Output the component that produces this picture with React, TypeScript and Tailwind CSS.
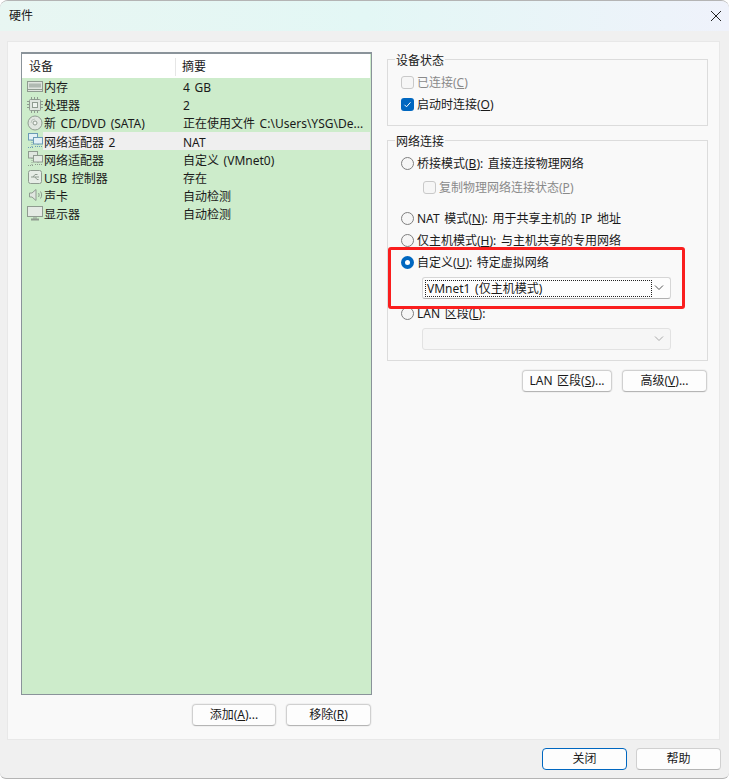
import React from "react";

const font = { fontFamily: '"Noto Sans","Noto Sans CJK SC",sans-serif' };

const devices: [string, string, string][] = [
  ["mem", "内存", "4 GB"],
  ["cpu", "处理器", "2"],
  ["cd", "新 CD/DVD (SATA)", "正在使用文件 C:\\Users\\YSG\\De..."],
  ["net", "网络适配器 2", "NAT"],
  ["net", "网络适配器", "自定义 (VMnet0)"],
  ["usb", "USB 控制器", "存在"],
  ["snd", "声卡", "自动检测"],
  ["mon", "显示器", "自动检测"],
];

function DevIcon({ kind, active }: { kind: string; active?: boolean }) {
  const c = active ? "#6a9ab5" : "#8f9b90";
  const s = { fill: "none", stroke: c, strokeWidth: 1 };
  return (
    <svg width="16" height="16" viewBox="0 0 16 16" className="shrink-0">
      {kind === "mem" && (
        <g {...s}>
          <rect x="0.5" y="2.5" width="15" height="10" fill="#dfe5df" />
          <path d="M2 5.500h12M2 7.500h12" strokeWidth="2" stroke="#b0bab2" />
          <path d="M1 10.500h14" />
        </g>
      )}
      {kind === "cpu" && (
        <g {...s}>
          <rect x="2.5" y="2.5" width="11" height="11" rx="1" fill="#dfe5df" />
          <rect x="5.5" y="5.5" width="5" height="5" fill="#eef3ee" />
          <path d="M4.500 0v2M7.500 0v2M10.500 0v2M4.500 14v2M7.500 14v2M10.500 14v2M0 4.500h2M0 7.500h2M0 10.500h2M14 4.500h2M14 7.500h2M14 10.500h2" />
        </g>
      )}
      {kind === "cd" && (
        <g {...s}>
          <circle cx="8" cy="8" r="7" fill="#e0e6e0" />
          <circle cx="8" cy="8" r="2" fill="#f2f5f2" />
          <path d="M4 8a4 4 0 0 1 4-4" stroke="#bcc5bd" />
        </g>
      )}
      {kind === "net" && (
        <g {...s}>
          <rect x="1.5" y="0.5" width="9" height="6.500" fill={active ? "#e2f0f6" : "#dfe6df"} />
          <rect x="6.5" y="4.500" width="9" height="6.500" fill={active ? "#e2f0f6" : "#e4ebe4"} />
          <path d="M11 11v2M8 13.500h7M5 7v7M1 14.500h6" strokeDasharray="1 1" />
        </g>
      )}
      {kind === "usb" && (
        <g {...s}>
          <rect x="1.5" y="1.5" width="13" height="13" rx="2" fill="#e6ece6" />
          <path d="M4 8h8M6 8l2-2.500h2.500M8 8l2 2.500h1.500" />
        </g>
      )}
      {kind === "snd" && (
        <g {...s}>
          <path d="M2.500 6v4h2.500l4 3.500v-11L5 6z" fill="#e0e6e0" />
          <path d="M11.500 6c.8 1.200.8 2.800 0 4M13.500 4.500c1.500 2.200 1.500 4.800 0 7" />
        </g>
      )}
      {kind === "mon" && (
        <g {...s}>
          <rect x="0.5" y="1.5" width="15" height="10" fill="#e4eae4" />
          <path d="M4 14.500h8" strokeWidth="2" />
          <path d="M7 12v2M9 12v2" />
        </g>
      )}
    </svg>
  );
}

function Check({ checked, label, className = "" }: { checked?: boolean; label: React.ReactNode; className?: string }) {
  return (
    <div className={`flex items-center h-[18px] gap-[3px] ${className}`}>
      {checked ? (
        <span className="w-[13px] h-[13px] rounded-[3px] bg-[#0067c0] flex items-center justify-center">
          <svg width="9" height="9" viewBox="0 0 9 9"><path d="M1.500 4.800l2 2 4-4.500" fill="none" stroke="#fff" strokeWidth="1" /></svg>
        </span>
      ) : (
        <span className="w-[13px] h-[13px] rounded-[3px] border border-[#c9c9c9] bg-[#f6f6f6]" />
      )}
      <span className={`pt-px ${checked ? "text-[#1a1a1a]" : "text-[#8a8a8a]"}`}>{label}</span>
    </div>
  );
}

function Radio({ on, label, className = "" }: { on?: boolean; label: React.ReactNode; className?: string }) {
  return (
    <div className={`flex items-center h-[18px] gap-[3px] ${className}`}>
      {on ? (
        <span className="w-[13px] h-[13px] rounded-full bg-[#0067c0] flex items-center justify-center">
          <span className="w-[5px] h-[5px] rounded-full bg-white" />
        </span>
      ) : (
        <span className="w-[13px] h-[13px] rounded-full border border-[#7f7f7f] bg-[#f6f6f6]" />
      )}
      <span className="pt-px">{label}</span>
    </div>
  );
}

function Chevron({ color }: { color: string }) {
  return (
    <svg width="10" height="6" viewBox="0 0 10 6"><path d="M1 .5l4 4 4-4" fill="none" stroke={color} strokeWidth="1" /></svg>
  );
}

function Btn({ children, className = "" }: { children: React.ReactNode; className?: string }) {
  return (
    <div className={`h-[22px] flex items-center justify-center rounded-[4px] border border-[#d0d0d0] border-b-[#b5b5b5] bg-[#fdfdfd] shadow-[0_0_0_1px_#f0f0f0] text-[#1a1a1a] ${className}`}>
      {children}
    </div>
  );
}

function Group({ title, children, className = "" }: { title: string; children: React.ReactNode; className?: string }) {
  return (
    <fieldset className={`border border-[#dcdcdc] pl-[13px] pr-[13px] ${className}`}>
      <legend className="-ml-[6px] px-px pt-[4px] leading-[14px] text-[#1a1a1a]">{title}</legend>
      {children}
    </fieldset>
  );
}

export default function App() {
  return (
    <div style={font} className="w-[729px] h-[779px] bg-white text-[12px] leading-[18px] [word-spacing:1.5px] text-[#1a1a1a] overflow-hidden">
      <div className="w-full h-full flex flex-col rounded-t-[8px] rounded-b-[6px] border border-[#b4b4b4] border-l-0 border-r-0 bg-[#f0f0f0] overflow-hidden">
        <div className="h-[30px] shrink-0 flex items-center justify-between pl-[9px] pr-[6px] bg-gradient-to-r from-[#e8f6f2] via-[#e3f7f5] to-[#eff2fb]">
          <span>硬件</span>
          <svg width="14" height="14" viewBox="0 0 14 14"><path d="M2 2l10 10M12 2L2 12" stroke="#222" strokeWidth="1" fill="none" /></svg>
        </div>

        <div className="mt-[10px] mx-[7px] mr-[9px] h-[699px] shrink-0 border border-[#e8e8e8] bg-[#f9f9f9] flex pl-[13px] pt-[10px] pr-[11px] gap-[15px]">
          <div className="w-[351px] shrink-0 flex flex-col">
            <div className="h-[643px] border border-[#8a939a] border-t-2 bg-[#cdeccb] flex flex-col">
              <div className="h-[24px] shrink-0 bg-white flex items-center mr-px pt-[2px]">
                <span className="w-[154px] pl-[7px] border-r border-[#e6e6e6]">设备</span>
                <span className="pl-[6px]">摘要</span>
              </div>
              {devices.map(([k, name, val], i) => (
                <div key={i} className="h-[18px] shrink-0 flex items-center pl-[5px] whitespace-nowrap">
                  <div className="w-[16px] shrink-0 flex justify-start"><DevIcon kind={k} active={i === 3} /></div>
                  <div className={`flex-1 flex h-full items-center mr-px ${i >= 3 ? "pt-[3px]" : "pt-[2px]"} ${i === 3 ? "bg-[#efefef]" : ""}`}>
                    <span className="w-[140px] shrink-0 pl-px">{name}</span>
                    <span>{val}</span>
                  </div>
                </div>
              ))}
            </div>
            <div className="mt-[9px] flex justify-end gap-[10px]">
              <Btn className="w-[84px]"><span>添加(<u>A</u>)...</span></Btn>
              <Btn className="w-[85px] mr-px"><span>移除(<u>R</u>)</span></Btn>
            </div>
          </div>

          <div className="w-[321px] shrink-0 flex flex-col">
            <Group title="设备状态" className="h-[76px] -mt-[2px]">
              <Check label={<>已连接(<u>C</u>)</>} className="mt-[5px]" />
              <Check checked label={<>启动时连接(<u>O</u>)</>} className="mt-[4px]" />
            </Group>
            <Group title="网络连接" className="h-[230px] mt-[5px]">
              <Radio label={<>桥接模式(<u>B</u>): 直接连接物理网络</>} className="mt-[5px]" />
              <Check label={<>复制物理网络连接状态(<u>P</u>)</>} className="ml-[22px] mt-[6px]" />
              <Radio label={<>NAT 模式(<u>N</u>): 用于共享主机的 IP 地址</>} className="mt-[13px]" />
              <Radio label={<>仅主机模式(<u>H</u>): 与主机共享的专用网络</>} className="mt-[4px]" />
              <Radio on label={<>自定义(<u>U</u>): 特定虚拟网络</>} className="mt-[4px]" />
              <div className="ml-[21px] mt-[6px] w-[249px] h-[22px] border border-[#d6d6d6] border-b-[#b0b0b0] rounded-[3px] bg-[#fdfdfd] flex items-center justify-between pl-[2px] pr-[6px]">
                <span className="w-[227px] h-[17px] border border-dotted border-[#222] flex items-center pl-[1px] pt-px">VMnet1 (仅主机模式)</span>
                <Chevron color="#555" />
              </div>
              <Radio label={<>LAN 区段(<u>L</u>):</>} className="mt-[5px]" />
              <div className="ml-[21px] mt-[6px] w-[249px] h-[22px] border border-[#e2e2e2] rounded-[3px] bg-[#f6f6f6] flex items-center justify-end pr-[6px]">
                <Chevron color="#a8a8a8" />
              </div>
            </Group>
            <div className="mt-[9px] flex justify-end gap-[10px] pr-px">
              <Btn className="w-[90px]"><span>LAN 区段(<u>S</u>)...</span></Btn>
              <Btn className="w-[85px]"><span>高级(<u>V</u>)...</span></Btn>
            </div>
          </div>
        </div>

        <div className="flex justify-end gap-[9px] pr-[8px] mt-[8px]">
          <div className="w-[85px] h-[22px] rounded-[4px] border border-[#0067c0] bg-[#fdfdfd] flex items-center justify-center">关闭</div>
          <Btn className="w-[85px]">帮助</Btn>
        </div>
      </div>

      <div className="absolute left-[388px] top-[247px] w-[297px] h-[62px] border-[3px] border-[#fa1e1e] rounded-[3px]" />
    </div>
  );
}
